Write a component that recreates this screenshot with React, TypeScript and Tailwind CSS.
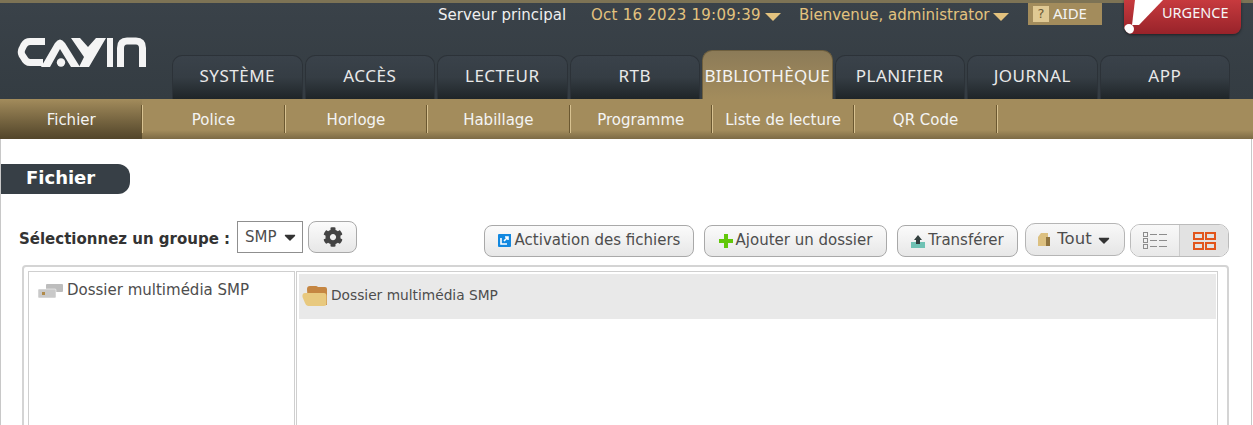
import { FaCog, FaCaretDown } from "react-icons/fa";

const VERDANA = "font-['DejaVu_Sans',sans-serif]";
const TAHOMA = "font-['Noto_Sans',sans-serif]";

const TABS = ["SYSTÈME", "ACCÈS", "LECTEUR", "RTB", "BIBLIOTHÈQUE", "PLANIFIER", "JOURNAL", "APP"];
const SUBTABS = ["Fichier", "Police", "Horloge", "Habillage", "Programme", "Liste de lecture", "QR Code"];

function Logo() {
  return (
    <svg width="130" height="31" viewBox="0 0 130 31" fill="none" stroke="#f4f4f4" strokeWidth="7">
      <path d="M28 4.5 H13 Q9 4.5 7 8 L5 12 Q3.5 14.8 5 18 L7 21 Q9 25.5 13 25.5 H26" />
      <path d="M24 30 L38 6 Q43 -1 48 6 L63 30 H54 L43 12 L33 30 Z" fill="#f4f4f4" stroke="none" />
      <circle cx="44" cy="25.5" r="4.2" fill="#f4f4f4" stroke="none" />
      <path d="M54 1 H63 L71 10 L79 1 H89 L72 30 H62 L67 20 Z" fill="#f4f4f4" stroke="none" />
      <path d="M93 1 V30" strokeWidth="6" />
      <path d="M103.5 30 V11 Q103.5 4 110 4 H119 Q125.5 4 125.5 11 V30" />
    </svg>
  );
}

function Caret() {
  return <span className="inline-block ml-[4px] border-x-[8px] border-t-[8px] border-x-transparent border-t-[#e3c27e] translate-y-[1px]" />;
}

function Tab({ label, active }: { label: string; active: boolean }) {
  if (active) {
    return (
      <div className={`w-[130.5px] h-[49px] pb-[3px] pt-[5px] flex items-center justify-center rounded-t-[10px] border border-b-0 border-[#6e5f3e] bg-gradient-to-b from-[#8c7b58] to-[#a38c5c] text-[17px] tracking-[0.3px] text-[#f4f4f4] whitespace-nowrap ${TAHOMA}`}>
        {label}
      </div>
    );
  }
  return (
    <div className={`w-[130.5px] h-[44px] pb-[4px] flex items-center justify-center rounded-t-[10px] border border-b-0 border-[#2c3238] bg-gradient-to-b from-[#3a424a] via-[#353d44] to-[#1f2528] text-[17px] tracking-[0.5px] text-[#e9e9e9] ${TAHOMA}`}>
      {label}
    </div>
  );
}

function ActionButton({ icon, label, width }: { icon: React.ReactNode; label: string; width: string }) {
  return (
    <div className={`${width} mt-[4px] h-[32px] pb-[1px] flex items-center justify-center gap-[3px] rounded-[8px] border border-[#a9a9a9] bg-gradient-to-b from-[#fbfbfb] to-[#e7e7e7] text-[15px] text-[#4d4d4d] whitespace-nowrap ${VERDANA}`}>
      {icon}
      {label}
    </div>
  );
}

function DriveIcon() {
  return (
    <svg width="26" height="16" viewBox="0 0 26 16">
      <rect x="8" y="1" width="17" height="8" rx="1" fill="#bdbdbd" />
      <rect x="0" y="6" width="18" height="9" rx="1" fill="#c9c9c9" stroke="#fff" strokeWidth="0.5" />
      <rect x="4" y="9" width="3" height="3" fill="#b08a4a" />
    </svg>
  );
}

function FolderIcon() {
  return (
    <svg width="25" height="22" viewBox="0 0 25 22">
      <path d="M5 4 Q5 1 8 1 H14 Q15 1 16 2 H23 Q25 2 25 4 V20 H6 Z" fill="#c58642" />
      <path d="M3 8 H22 Q24.5 8 24.5 11 V19 Q24.5 21 22 21 H6 Q4 21 3 18 L0.5 12 Q0 8 3 8 Z" fill="#e8c97f" />
    </svg>
  );
}

export default function App() {
  return (
    <div className="w-[1253px] h-[425px] overflow-hidden bg-white">
      {/* Header */}
      <div className="h-[99px] border-t-[3px] border-[#7d7355] bg-gradient-to-b from-[#3a4249] to-[#343c42] relative">
        <div className={`h-[25px] flex items-center text-[15px] ${VERDANA}`}>
          <span className="ml-[438px] w-[128px] whitespace-nowrap text-[#efefef]">Serveur principal</span>
          <span className="ml-[25px] w-[170px] tracking-[0.25px] whitespace-nowrap text-[#e3c27e]">Oct 16 2023 19:09:39</span>
          <Caret />
          <span className="ml-[18px] w-[190px] whitespace-nowrap text-[#e3c27e]">Bienvenue, administrator</span>
          <Caret />
          <div className="ml-[19px] w-[74px] h-[22px] bg-[#a38c5c] flex items-center self-start pl-[5px] gap-[4px] text-[#f4f4f4]">
            <span className="w-[16px] h-[16px] bg-[#e0c994] text-[13px] leading-[16px] text-center text-[#6b5a36]">?</span>
            <span className={`pb-[2px] text-[15px] ${TAHOMA}`}>AIDE</span>
          </div>
        </div>
        {/* Urgence */}
        <div className="absolute left-[1124px] top-[-3px] w-[117px] h-[34px] rounded-b-[8px] bg-gradient-to-b from-[#c73a3e] to-[#98232a] shadow-[0_1px_3px_rgba(0,0,0,0.5)] overflow-hidden">
          <svg className="absolute left-0 top-0" width="40" height="34" viewBox="0 0 40 34" fill="#fff">
            <path d="M11 0 H39 L15 25 H8 Z" />
            <circle cx="5" cy="29" r="5" />
          </svg>
          <span className={`absolute left-[38px] top-[2px] text-[14.5px] text-[#f6f6f6] ${TAHOMA}`}>URGENCE</span>
        </div>
        <div className="flex items-end h-[71px]">
          <div className="w-[172px] h-[64px] pl-[17px] self-start mt-[9px]">
            <Logo />
          </div>
          <div className="flex items-end gap-[2px]">
            {TABS.map((t) => (
              <Tab key={t} label={t} active={t === "BIBLIOTHÈQUE"} />
            ))}
          </div>
        </div>
      </div>

      {/* Sub navigation */}
      <div className="h-[40px] flex bg-[linear-gradient(to_bottom,#a38c5c_0%,#a38c5c_78%,#7c6a45_100%)]">
        {SUBTABS.map((t, i) => (
          <div
            key={t}
            className={`w-[142.4px] relative pt-[2px] flex items-center justify-center text-[15px] text-[#f4f4f4] whitespace-nowrap ${VERDANA} ${
              i === 0 ? "bg-gradient-to-b from-[#a38c5c] to-[#52452a]" : ""
            }`}
          >
            {t}
            <span className="absolute right-[-1px] top-[6px] h-[28px] w-[2px] border-l border-r border-l-[#6b5831] border-r-[#d8c291]" />
          </div>
        ))}
      </div>

      {/* Page body */}
      <div className="w-[1252px] h-[286px] border-x border-[#c8c8c8] pt-[25px]">
        <div className={`w-[129px] h-[30px] pb-[3px] flex items-center pl-[25px] rounded-r-[12px] bg-[#373f46] text-[18px] font-bold text-white ${VERDANA}`}>
          Fichier
        </div>

        <div className="mt-[27px] flex items-start">
          <span className={`ml-[18px] mt-[7px] w-[210px] whitespace-nowrap text-[15px] font-bold text-[#333] ${VERDANA}`}>
            Sélectionnez un groupe :
          </span>
          <div className={`ml-[8px] w-[66px] h-[32px] flex items-center pl-[7px] border border-[#8f8f8f] text-[15px] text-[#4d4d4d] ${VERDANA}`}>
            SMP
            <FaCaretDown className="ml-[4px] text-[#333]" size={18} />
          </div>
          <div className="ml-[5px] w-[49px] h-[32px] flex items-center justify-center rounded-[8px] border border-[#a9a9a9] bg-gradient-to-b from-[#fbfbfb] to-[#e7e7e7]">
            <FaCog className="text-[#444]" size={20} />
          </div>

          <div className="ml-[127px] flex items-start">
            <ActionButton
              width="w-[210px]"
              label="Activation des fichiers"
              icon={
                <svg width="13" height="13" viewBox="0 0 13 13" className="mr-[1px]">
                  <path d="M0 1 Q0 0 1 0 H13 V12 Q13 13 12 13 H1 Q0 13 0 12 Z" fill="#1288e0" />
                  <path d="M3 4 V10 H9 M6 7 L10 3 M7 3 H10 V6" fill="none" stroke="#fff" strokeWidth="1.6" />
                </svg>
              }
            />
            <div className="w-[10px]" />
            <ActionButton
              width="w-[183px]"
              label="Ajouter un dossier"
              icon={
                <svg width="14" height="14" viewBox="0 0 14 14">
                  <path d="M5 0 H9 V5 H14 V9 H9 V14 H5 V9 H0 V5 H5 Z" fill="#62c70a" />
                </svg>
              }
            />
            <div className="w-[10px]" />
            <ActionButton
              width="w-[121px]"
              label="Transférer"
              icon={
                <svg width="14" height="14" viewBox="0 0 14 14">
                  <path d="M0 8 H14 V14 H0 Z" fill="#6fc2b4" />
                  <path d="M7 1 L11 6 H9 V10 H5 V6 H3 Z" fill="#33403f" />
                </svg>
              }
            />
            <div className={`ml-[7px] mt-[2px] w-[100px] h-[33px] pr-[1px] flex items-center justify-center gap-[6px] rounded-[10px] border border-[#b5b5b5] bg-gradient-to-b from-[#f8f8f8] to-[#e6e6e6] text-[16.5px] text-[#4d4d4d] ${VERDANA}`}>
              <svg width="14" height="15" viewBox="0 0 14 15" className="mr-[1px]">
                <path d="M5 1 H12 V14 H2 V5 Z" fill="#dcc080" />
                <path d="M10 5 H14 V14 H10 Z" fill="#8f7440" />
              </svg>
              Tout
              <FaCaretDown className="text-[#333] -ml-[3px]" size={18} />
            </div>
            <div className="ml-[5px] mt-[3px] w-[99px] h-[33px] flex rounded-[10px] border border-[#bbb] overflow-hidden">
              <div className="w-[49px] flex items-center justify-center bg-gradient-to-b from-[#f8f8f8] to-[#e9e9e9] border-r border-[#ccc]">
                <svg width="24" height="17" viewBox="0 0 24 17" fill="none" stroke="#8c8c8c">
                  <rect x="0.5" y="0.5" width="4" height="4" />
                  <rect x="0.5" y="6.5" width="4" height="4" />
                  <rect x="0.5" y="12.5" width="4" height="4" />
                  <path d="M7 2.5 H14 M16 2.5 H24 M7 8.5 H14 M16 8.5 H24 M7 14.5 H14 M16 14.5 H24" strokeWidth="1.2" />
                </svg>
              </div>
              <div className="flex-1 flex items-center justify-center bg-[#e2e2e2]">
                <svg width="23" height="18" viewBox="0 0 23 18" fill="none" stroke="#e2551c" strokeWidth="2">
                  <rect x="1" y="1" width="9" height="6" />
                  <rect x="13" y="1" width="9" height="6" />
                  <rect x="1" y="11" width="9" height="6" />
                  <rect x="13" y="11" width="9" height="6" />
                </svg>
              </div>
            </div>
          </div>
        </div>

        {/* File browser */}
        <div className={`ml-[21px] mt-[8px] w-[1207px] h-[200px] flex gap-[1px] items-stretch pl-[4px] pt-[4px] rounded-[4px] border-2 border-[#d4d4d4] text-[15px] text-[#4d4d4d] ${VERDANA}`}>
          <div className="w-[267px] border border-[#cfcfcf] pl-[9px] pt-[7px] flex items-start gap-[3px] whitespace-nowrap">
            <span className="mt-[4px]"><DriveIcon /></span>
            Dossier multimédia SMP
          </div>
          <div className="w-[922px] border border-[#cfcfcf] pl-[2px] pt-[2px] pr-[1px]">
            <div className="h-[45px] pb-[2px] bg-[#e9e9e9] pl-[3px] flex items-center gap-[4px] text-[13.75px]">
              <FolderIcon />
              Dossier multimédia SMP
            </div>
          </div>
        </div>
      </div>
    </div>
  );
}
